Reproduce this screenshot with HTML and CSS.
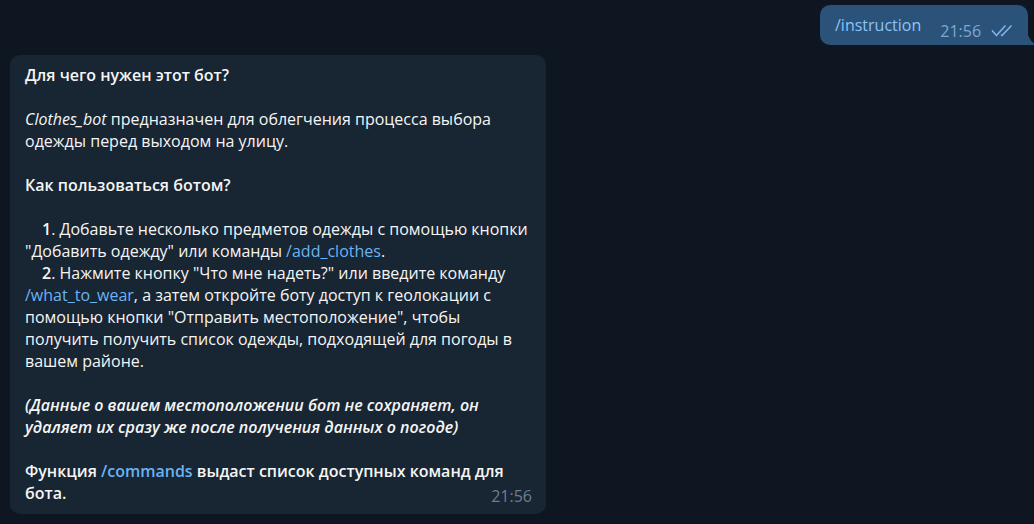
FILE: index.html
```html
<!DOCTYPE html>
<html lang="ru">
<head>
<meta charset="utf-8">
<link rel="stylesheet" href="styles.css">
</head>
<body>
<div class="chat">
  <div class="row out-row">
    <div class="bubble out">
      <span class="cmd">/instruction</span>
      <span class="meta">
        <span class="time">21:56</span>
        <svg class="checks" width="24" height="14" viewBox="0 0 24 14">
          <path d="M1.5 7 L5.5 11.5 L14 2" fill="none" stroke="#7fb2e3" stroke-width="1.7" stroke-linecap="round" stroke-linejoin="round"/>
          <path d="M10.5 11 L11 11.5 L20 2" fill="none" stroke="#7fb2e3" stroke-width="1.7" stroke-linecap="round" stroke-linejoin="round"/>
        </svg>
      </span>
      <svg class="tail" width="10" height="12" viewBox="0 0 10 12"><path d="M0 0 L0 12 L9 12 C6 10 3 7 2 4 L0 0 Z" fill="#2b5278"/></svg>
    </div>
  </div>
  <div class="row in-row">
    <div class="bubble in">
      <p class="b">Для чего нужен этот бот?</p>
      <p class="gap"><i>Clothes_bot</i> предназначен для облегчения процесса выбора одежды перед выходом на улицу.</p>
      <p class="b gap">Как пользоваться ботом?</p>
      <p class="gap item"><b>1</b>. Добавьте несколько предметов одежды с помощью кнопки "Добавить одежду" или команды <a class="link">/add_clothes</a>.</p>
      <p class="item"><b>2</b>. Нажмите кнопку "Что мне надеть?" или введите команду <a class="link">/what_to_wear</a>, а затем откройте боту доступ к геолокации с помощью кнопки "Отправить местоположение", чтобы получить получить список одежды, подходящей для погоды в вашем районе.</p>
      <p class="gap bi">(Данные о вашем местоположении бот не сохраняет, он удаляет их сразу же после получения данных о погоде)</p>
      <p class="gap last">Функция <a class="link">/commands</a> выдаст список доступных команд для бота.<span class="time in-time">21:56</span></p>
    </div>
  </div>
</div>
</body>
</html>
```
FILE: styles.css
```css
html, body {
  margin: 0;
  padding: 0;
  background: #0e1621;
  width: 1034px;
  height: 524px;
  overflow: hidden;
}
body {
  font-family: "Open Sans", "Noto Sans", sans-serif;
  font-size: 16px;
  line-height: 22px;
  color: #f5f5f5;
}
.chat {
  display: flex;
  flex-direction: column;
  padding: 5px 6px 0 10px;
  gap: 10px;
}
.row {
  display: flex;
}
.out-row {
  justify-content: flex-end;
}
.bubble {
  position: relative;
  border-radius: 10px;
}
.out {
  background: #2b5278;
  height: 40px;
  width: 208px;
  box-sizing: border-box;
  display: flex;
  align-items: center;
  padding: 0 0 0 15px;
  border-bottom-right-radius: 0;
}
.cmd {
  color: #8cc4f7;
  margin-top: 0;
}
.meta {
  display: flex;
  align-items: center;
  margin-left: 19px;
  margin-top: 12px;
  gap: 10px;
}
.time {
  font-size: 16px;
  color: #7da8d3;
}
.checks {
  display: block;
  margin-top: 0;
}
.tail {
  position: absolute;
  right: -9px;
  bottom: 0;
  display: block;
}
.in {
  background: #182533;
  width: 536px;
  box-sizing: border-box;
  padding: 9px 14px 10px 15px;
}
p {
  margin: 0;
}
.gap {
  margin-top: 22px;
}
.b, .last {
  font-weight: 600;
}
.bi {
  font-weight: 600;
  font-style: italic;
}
.item {
  text-indent: 17px;
}
.item b {
  font-weight: 600;
}
.link {
  color: #6ab3f3;
}
.in-time {
  float: right;
  font-weight: 400;
  color: #6d7f8f;
  line-height: 16px;
  padding-top: 6px;
  margin-right: 0;
}
```
